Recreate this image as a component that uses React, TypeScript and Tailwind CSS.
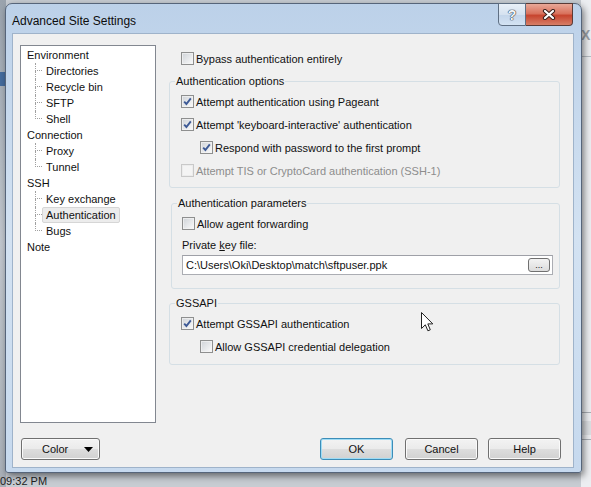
import React from "react";

type Node = { name: string; kids: string[] };

const tree: Node[] = [
  { name: "Environment", kids: ["Directories", "Recycle bin", "SFTP", "Shell"] },
  { name: "Connection", kids: ["Proxy", "Tunnel"] },
  { name: "SSH", kids: ["Key exchange", "Authentication", "Bugs"] },
  { name: "Note", kids: [] },
];

function Check({ checked = false, disabled = false }: { checked?: boolean; disabled?: boolean }) {
  return (
    <span
      className={`flex h-[13px] w-[13px] shrink-0 items-center justify-center border ${
        disabled ? "border-[#c9c9c9] bg-[#f4f4f4]" : "border-[#8e8f8f] bg-gradient-to-br from-[#cfd3d8] to-[#fbfbfb]"
      }`}
    >
      <span className={`flex h-[11px] w-[11px] items-center justify-center border ${disabled ? "border-[#ececec]" : "border-[#f3f3f3]/70"}`}>
        {checked && (
          <svg width="9" height="9" viewBox="0 0 9 9">
            <path d="M1.2 4.6 L3.4 7 L7.8 1.4" fill="none" stroke="#3d5a96" strokeWidth="1.9" />
          </svg>
        )}
      </span>
    </span>
  );
}

function Row({ label, checked, disabled, indent }: { label: string; checked?: boolean; disabled?: boolean; indent?: boolean }) {
  return (
    <div className={`flex h-[23px] items-center gap-[2px] ${indent ? "ml-[19px]" : ""}`}>
      <Check checked={checked} disabled={disabled} />
      <span className={disabled ? "text-[#8d8d8d]" : ""}>{label}</span>
    </div>
  );
}

function Group({ title, className, children }: { title: string; className: string; children: React.ReactNode }) {
  return (
    <fieldset className={`rounded-[3px] border border-[#d5dfe5] pl-[5px] ${className}`}>
      <legend className="px-[1px] leading-[14px]">{title}</legend>
      {children}
    </fieldset>
  );
}

function Button({ label, primary, className }: { label: string; primary?: boolean; className?: string }) {
  return (
    <button
      type="button"
      className={`flex h-[22px] items-center justify-center rounded-[3px] border bg-[linear-gradient(#f3f3f3_0%,#ebebeb_48%,#dddddd_52%,#d1d1d1_100%)] ${
        primary ? "border-[#3c8db8] shadow-[inset_0_0_0_1px_#9fdcf5]" : "border-[#707070] shadow-[inset_0_0_0_1px_#fafafa]"
      } ${className ?? ""}`}
    >
      {label}
    </button>
  );
}

export default function App() {
  return (
    <div
      className="relative h-[487px] w-[591px] overflow-hidden bg-[#c7ccd2] text-[11px] leading-[14px] text-[#111]"
      style={{ fontFamily: '"Liberation Sans", Arial, sans-serif' }}
    >
      {/* desktop behind the dialog */}
      <div className="absolute left-0 top-0 h-[487px] w-[6px] bg-gradient-to-b from-[#9aa3ad] via-[#c2c8cf] to-[#a9b0b8]" />
      <div className="absolute left-0 top-[72px] h-[14px] w-[6px] bg-[#456c9e]" />
      <div className="absolute right-0 top-0 h-[487px] w-[10px] bg-[#eceef1]">
        <div className="mt-[28px] h-[14px] text-[14px] font-bold leading-[14px] text-[#9aa1a8]">X</div>
        <div className="mt-[14px] h-px bg-[#b7bcc2]" />
        <div className="mt-[355px] h-px bg-[#a9aeb4]" />
        <div className="mt-[8px] h-[14px] bg-[#dcdfe2]" />
        <div className="mt-[4px] h-px bg-[#a9aeb4]" />
      </div>
      <div className="absolute bottom-0 left-0 text-[11px] leading-[12px] text-[#222]">09:32 PM</div>

      {/* dialog window */}
      <div className="absolute left-[5px] top-[3px] flex h-[470px] w-[577px] flex-col rounded-t-[7px] rounded-b-[3px] border border-[#56657a] bg-gradient-to-b from-[#bcd1e9] via-[#d3e2f2] to-[#c6d9ee] shadow-[2px_3px_7px_rgba(0,0,0,0.5)]">
        {/* title bar */}
        <div className="flex h-[29px] shrink-0 items-start">
          <div className="pl-[6px] pt-[10px] text-[12px] text-[#0c0c0c]">Advanced Site Settings</div>
          <div className="ml-auto mr-[8px] -mt-[1px] flex h-[23px]">
            <div className="flex w-[28px] items-center justify-center rounded-bl-[4px] border border-[#5f6f83] bg-[linear-gradient(#e9f0f8_0%,#d5e2f0_50%,#c3d5ea_52%,#d4e3f3_100%)]">
              <span className="text-[14px] font-bold leading-[14px] text-[#f4f7fa] [text-shadow:0_0_1px_#2a3340,0_0_1px_#2a3340,0_0_1px_#2a3340]">?</span>
            </div>
            <div className="flex w-[47px] items-center justify-center rounded-br-[4px] border border-l-0 border-[#5a3a36] bg-[linear-gradient(#e9a898_0%,#d9735e_45%,#c7452f_55%,#d77e66_100%)]">
              <svg width="14" height="11" viewBox="0 0 14 11">
                <path d="M3 2 L11 9 M11 2 L3 9" stroke="#3a1f1b" strokeWidth="4.2" strokeLinecap="round" />
                <path d="M3 2 L11 9 M11 2 L3 9" stroke="#ffffff" strokeWidth="2.2" strokeLinecap="round" />
              </svg>
            </div>
          </div>
        </div>

        {/* client area */}
        <div className="ml-[6px] mr-[7px] flex h-[435px] flex-col border border-[#9fb3ca] bg-[#f0f0f0]">
          <div className="flex gap-[13px] pl-[7px] pt-[11px]">
            {/* navigation tree */}
            <div className="h-[378px] w-[136px] border border-[#828790] bg-white pt-px">
              {tree.map((node) => (
                <div key={node.name}>
                  <div className="flex h-[16px] items-center pl-[6px]">{node.name}</div>
                  {node.kids.map((kid, i) => {
                    const last = i === node.kids.length - 1;
                    const selected = kid === "Authentication";
                    return (
                      <div key={kid} className="flex h-[16px] pl-[14px]">
                        <div className="flex w-[7px] flex-col">
                          <div className="h-[8px] border-b border-l border-dotted border-[#a0a0a0]" />
                          {!last && <div className="flex-1 border-l border-dotted border-[#a0a0a0]" />}
                        </div>
                        <div
                          className={`flex items-center rounded-[2px] border px-[3px] ${
                            selected ? "border-[#d6d6d6] bg-[#ececec]" : "border-transparent"
                          }`}
                        >
                          {kid}
                        </div>
                      </div>
                    );
                  })}
                </div>
              ))}
            </div>

            {/* authentication page */}
            <div className="w-[391px]">
              <div className="mt-[2px] pl-[12px]">
                <Row label="Bypass authentication entirely" />
              </div>

              <Group title="Authentication options" className="mt-[4px] w-[391px] pb-[5px]">
                <div className="pl-[6px] pt-[2px]">
                  <Row label="Attempt authentication using Pageant" checked />
                  <Row label="Attempt 'keyboard-interactive' authentication" checked />
                  <Row label="Respond with password to the first prompt" checked indent />
                  <Row label="Attempt TIS or CryptoCard authentication (SSH-1)" disabled />
                </div>
              </Group>

              <Group title="Authentication parameters" className="ml-[2px] mt-[8px] w-[389px] pb-[13px]">
                <div className="pl-[5px] pt-[2px]">
                  <Row label="Allow agent forwarding" />
                  <div className="mt-[3px]">
                    Private <span className="underline">k</span>ey file:
                  </div>
                  <div className="mt-[3px] flex h-[20px] w-[371px] items-center justify-between border border-[#abadb3] border-t-[#9ea0a7] bg-white pl-[3px] pr-[2px]">
                    <span>{"C:\\Users\\Oki\\Desktop\\match\\sftpuser.ppk"}</span>
                    <span className="flex h-[14px] w-[22px] items-end justify-center rounded-[3px] border border-[#707070] bg-[linear-gradient(#f3f3f3,#dcdcdc)] pb-[1px] text-[9px] leading-[9px]">
                      ...
                    </span>
                  </div>
                </div>
              </Group>

              <Group title="GSSAPI" className="mt-[7px] w-[391px] pb-[6px]">
                <div className="pl-[6px] pt-[2px]">
                  <Row label="Attempt GSSAPI authentication" checked />
                  <Row label="Allow GSSAPI credential delegation" indent />
                </div>
              </Group>
            </div>
          </div>

          {/* dialog buttons */}
          <div className="mt-[15px] flex items-center pl-[8px]">
            <button
              type="button"
              className="flex h-[22px] w-[79px] items-center rounded-[3px] border border-[#707070] bg-[linear-gradient(#f3f3f3_0%,#ebebeb_48%,#dddddd_52%,#d1d1d1_100%)] shadow-[inset_0_0_0_1px_#fafafa]"
            >
              <span className="ml-[20px]">Color</span>
              <svg className="ml-auto mr-[6px]" width="9" height="5" viewBox="0 0 9 5">
                <path d="M0 0 H9 L4.5 5 Z" fill="#000" />
              </svg>
            </button>
            <Button label="OK" primary className="ml-[220px] w-[73px]" />
            <Button label="Cancel" className="ml-[12px] w-[73px]" />
            <Button label="Help" className="ml-[10px] w-[73px]" />
          </div>
        </div>
      </div>

      {/* mouse pointer */}
      <svg className="absolute left-[421px] top-[312px]" width="13" height="21" viewBox="0 0 13 21">
        <path d="M0.5 0.5 V16.5 L4.3 12.8 L6.9 18.8 L9.3 17.8 L6.8 11.9 H11.8 Z" fill="#fff" stroke="#222" strokeWidth="1" strokeLinejoin="round" />
      </svg>
    </div>
  );
}
